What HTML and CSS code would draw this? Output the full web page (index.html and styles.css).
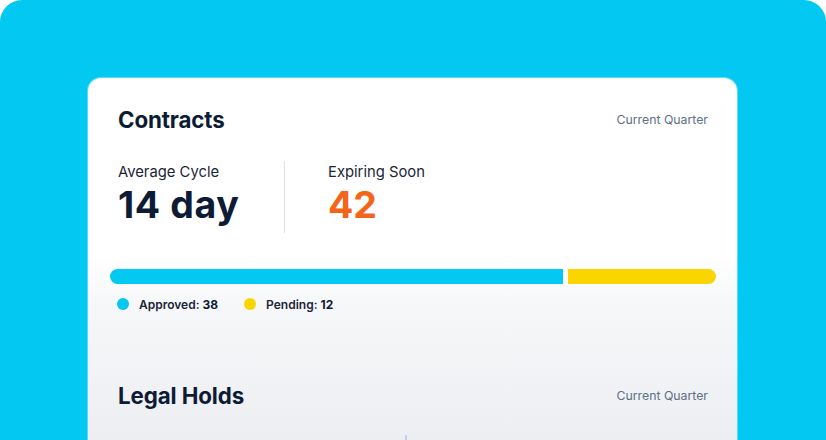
FILE: index.html
```html
<!DOCTYPE html>
<html lang="en">
<head>
<meta charset="utf-8">
<title>Contracts</title>
<link rel="stylesheet" href="styles.css">
</head>
<body>
<div class="stage">
  <div class="card">
    <section class="section">
      <div class="head">
        <h2 class="title">Contracts</h2>
        <span class="period">Current Quarter</span>
      </div>
      <div class="stats">
        <div class="stat stat-first">
          <div class="stat-label">Average Cycle</div>
          <div class="stat-value">14 day</div>
        </div>
        <div class="stat stat-second">
          <div class="stat-label">Expiring Soon</div>
          <div class="stat-value orange">42</div>
        </div>
      </div>
      <div class="bar">
        <div class="seg seg-blue"></div>
        <div class="seg seg-yellow"></div>
      </div>
      <div class="legend">
        <div class="legend-item"><span class="dot dot-blue"></span><span class="legend-text">Approved: <b>38</b></span></div>
        <div class="legend-item"><span class="dot dot-yellow"></span><span class="legend-text">Pending: <b>12</b></span></div>
      </div>
    </section>
    <section class="section section-second">
      <div class="head">
        <h2 class="title">Legal Holds</h2>
        <span class="period">Current Quarter</span>
      </div>
      <div class="tick"></div>
    </section>
  </div>
</div>
</body>
</html>
```
FILE: styles.css
```css
* { box-sizing: border-box; }
html, body { margin: 0; padding: 0; background: #ffffff; }
body { font-family: Inter, "Noto Sans", sans-serif; width: 826px; height: 440px; overflow: hidden; }

.stage {
  width: 826px;
  height: 440px;
  background: #02c8f2;
  border-radius: 22px 22px 0 0;
  padding: 78px 89px 0 88px;
  overflow: hidden;
}

.card {
  height: 420px;
  border-radius: 13px;
  background: linear-gradient(to bottom, #ffffff 0px, #ffffff 175px, #f6f7f9 230px, #eceef1 362px);
  box-shadow: 0 0 0 1px rgba(255,255,255,0.35);
  padding: 26px 29px 0 30px;
}

.head {
  display: flex;
  align-items: center;
  justify-content: space-between;
  height: 31px;
}
.title {
  margin: 0;
  font-size: 22.3px;
  font-weight: 700;
  color: #0d1b34;
  letter-spacing: -0.1px;
}
.period {
  font-size: 12.3px;
  color: #5f6f86;
  font-weight: 400;
}

.stats {
  display: flex;
  margin-top: 26px;
  height: 72px;
}
.stat-first { width: 166px; }
.stat-second { border-left: 1px solid #dde3ee; padding-left: 43px; }
.stat-label {
  font-size: 14.8px;
  color: #1b2538;
  line-height: 22px;
}
.stat-value {
  font-size: 37.5px;
  font-weight: 700;
  color: #0d1b34;
  line-height: 44px;
  letter-spacing: 0.6px;
}
.orange { color: #f4641a; letter-spacing: 0; }

.bar {
  display: grid;
  grid-template-columns: 453fr 148fr;
  column-gap: 5px;
  margin: 36px -8px 0 -8px;
  height: 15px;
}
.seg-blue { background: #02c8f2; border-radius: 8px 0 0 8px; }
.seg-yellow { background: #fbd500; border-radius: 0 8px 8px 0; }

.legend {
  display: flex;
  gap: 26px;
  margin-top: 12px;
  margin-left: -1px;
  height: 16px;
  align-items: center;
}
.legend-item { display: flex; align-items: center; gap: 10px; }
.dot { width: 12px; height: 12px; border-radius: 50%; display: inline-block; }
.dot-blue { background: #02c8f2; }
.dot-yellow { background: #fbd500; }
.legend-text { font-size: 12px; font-weight: 600; color: #1b2538; }
.legend-text b { font-weight: 700; color: #0d1b34; }

.section-second { margin-top: 68px; position: relative; }
.tick {
  position: absolute;
  left: 287px;
  top: 55px;
  width: 2px;
  height: 6px;
  background: #c9cde6;
}
```
